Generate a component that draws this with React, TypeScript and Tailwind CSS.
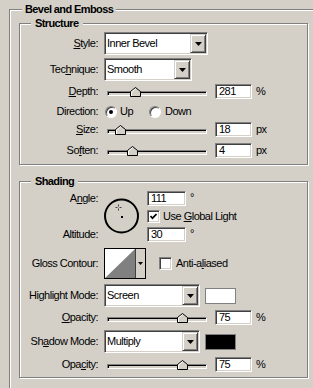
import React from "react";

// Photoshop "Layer Style > Bevel and Emboss" panel, classic Win2k chrome.

const sunken =
  "border border-[#808080] border-r-white border-b-white shadow-[inset_1px_1px_0_#404040,inset_-1px_-1px_0_#d4d0c8]";
const raised =
  "border border-[#d4d0c8] border-r-[#404040] border-b-[#404040] shadow-[inset_1px_1px_0_#fff,inset_-1px_-1px_0_#808080]";
const group =
  "relative border border-[#808080] shadow-[inset_1px_1px_0_#fff,1px_1px_0_#fff]";

function GroupTitle({ children }: { children: React.ReactNode }) {
  return (
    <span className="absolute left-[11px] top-[-7px] bg-[#d4d0c8] px-[4px] text-[11px] font-bold leading-[13px] tracking-[-0.6px]">
      {children}
    </span>
  );
}

function Label({ children }: { children: React.ReactNode }) {
  return <div className="w-[78px] shrink-0 text-right leading-[15px]">{children}</div>;
}

function Arrow() {
  return (
    <svg width="7" height="4" viewBox="0 0 7 4">
      <polygon points="0,0 7,0 3.5,4" fill="#000" />
    </svg>
  );
}

function Select({ value, width }: { value: string; width: string }) {
  return (
    <div className={`ml-[6px] flex h-[23px] shrink-0 bg-white p-[1px] ${width} ${sunken}`}>
      <span className="flex-1 pl-[1px] leading-[19px]">{value}</span>
      <div className={`flex h-[19px] w-[16px] items-center justify-center bg-[#d4d0c8] ${raised}`}>
        <Arrow />
      </div>
    </div>
  );
}

function NumBox({ value, width = "w-[37px]" }: { value: string; width?: string }) {
  return (
    <div className={`h-[15px] shrink-0 bg-white pl-[3px] leading-[13px] ${width} ${sunken}`}>
      {value}
    </div>
  );
}

function Slider({ pos }: { pos: number }) {
  return (
    <div className="relative ml-[9px] h-[15px] w-[100px] shrink-0">
      <div className="absolute left-0 top-[7px] h-[5px] w-[100px] border border-[#808080] border-r-white border-b-white bg-[#d4d0c8] shadow-[inset_1px_1px_0_#000]" />
      <svg
        className="absolute top-[3px]"
        style={{ left: pos - 5 }}
        width="11"
        height="10"
        viewBox="0 0 11 10"
      >
        <polygon points="0.5,9.5 0.5,4.5 5.5,0.5 10.5,4.5 10.5,9.5" fill="#d4d0c8" stroke="#000" />
        <polyline points="1.5,9 1.5,5 5.5,1.8" fill="none" stroke="#fff" />
      </svg>
    </div>
  );
}

function Radio({ checked }: { checked?: boolean }) {
  return (
    <div className="relative h-[12px] w-[12px] shrink-0 rounded-full border border-[#808080] border-r-white border-b-white bg-white shadow-[inset_1px_1px_0_#404040]">
      {checked ? (
        <div className="absolute left-[3px] top-[3px] h-[4px] w-[4px] rounded-full bg-black" />
      ) : null}
    </div>
  );
}

function Check({ checked }: { checked?: boolean }) {
  return (
    <div className={`flex h-[13px] w-[13px] shrink-0 items-center justify-center bg-white ${sunken}`}>
      {checked ? (
        <svg width="7" height="7" viewBox="0 0 7 7">
          <polyline points="0.5,3 2.5,5.2 6.5,1" fill="none" stroke="#000" strokeWidth="1.7" />
        </svg>
      ) : null}
    </div>
  );
}

function SliderRow({
  label,
  pos,
  value,
  unit,
  className = "",
}: {
  label: React.ReactNode;
  pos: number;
  value: string;
  unit: string;
  className?: string;
}) {
  return (
    <div className={`flex h-[15px] items-center ${className}`}>
      <Label>{label}</Label>
      <Slider pos={pos} />
      <div className="ml-[8px]">
        <NumBox value={value} />
      </div>
      <span className="ml-[4px] leading-[15px]">{unit}</span>
    </div>
  );
}

export default function App() {
  return (
    <div className="h-[388px] w-[313px] overflow-hidden bg-[#d4d0c8] pl-[9px] pt-[9px] font-['Liberation_Sans',Arial,sans-serif] text-[11px] tracking-[-0.5px] text-black">
      <div className="relative h-[400px] w-[320px] border border-[#808080] pl-[9px] pt-[13px] shadow-[inset_1px_1px_0_#fff]">
        <span className="absolute left-[12px] top-[-7px] bg-[#d4d0c8] px-[3px] text-[11px] font-bold leading-[13px] tracking-[-0.6px]">
          Bevel and Emboss
        </span>

        {/* Structure */}
        <div className={`h-[142px] w-[289px] ${group}`}>
          <GroupTitle>Structure</GroupTitle>

          <div className="mt-[8px] flex h-[23px] items-center">
            <Label>
              <u>S</u>tyle:
            </Label>
            <Select value="Inner Bevel" width="w-[104px]" />
          </div>

          <div className="mt-[3px] flex h-[23px] items-center">
            <Label>
              Tec<u>h</u>nique:
            </Label>
            <Select value="Smooth" width="w-[88px]" />
          </div>

          <SliderRow
            className="mt-[3px]"
            label={
              <>
                <u>D</u>epth:
              </>
            }
            pos={28}
            value="281"
            unit="%"
          />

          <div className="mt-[5px] flex h-[15px] items-center">
            <Label>Direction:</Label>
            <div className="ml-[7px]">
              <Radio checked />
            </div>
            <span className="ml-[3px] w-[29px] leading-[15px]">Up</span>
            <Radio />
            <span className="ml-[4px] leading-[15px]">Down</span>
          </div>

          <SliderRow
            className="mt-[3px]"
            label={
              <>
                <u>S</u>ize:
              </>
            }
            pos={13}
            value="18"
            unit="px"
          />

          <SliderRow
            className="mt-[6px]"
            label={
              <>
                So<u>f</u>ten:
              </>
            }
            pos={25}
            value="4"
            unit="px"
          />
        </div>

        {/* Shading */}
        <div className={`mt-[16px] h-[197px] w-[289px] ${group}`}>
          <GroupTitle>Shading</GroupTitle>

          <div className="mt-[9px] flex">
            <div className="flex w-[78px] shrink-0 flex-col items-end">
              <div className="h-[15px] leading-[15px]">
                A<u>n</u>gle:
              </div>
              <div className="mt-[21px] h-[15px] leading-[15px]">Altitude:</div>
            </div>
            <svg className="ml-[6px] mt-[7px] shrink-0" width="36" height="36" viewBox="0 0 36 36">
              <circle cx="17.5" cy="18" r="16.5" fill="none" stroke="#000" strokeWidth="2" />
              <path d="M14.5 6.5v2M14.5 10.5v2M11.5 9.5h2M15.5 9.5h2" stroke="#404040" strokeWidth="1" />
              <rect x="17" y="18" width="2" height="2" fill="#000" />
            </svg>
            <div className="ml-[7px] flex flex-col">
              <div className="flex h-[15px] items-center">
                <NumBox value="111" width="w-[39px]" />
                <span className="ml-[4px] self-start leading-[13px]">°</span>
              </div>
              <div className="mt-[4px] flex h-[13px] items-center">
                <Check checked />
                <span className="ml-[3px] leading-[13px]">
                  Use <u>G</u>lobal Light
                </span>
              </div>
              <div className="mt-[4px] flex h-[15px] items-center">
                <NumBox value="30" width="w-[39px]" />
                <span className="ml-[4px] self-start leading-[13px]">°</span>
              </div>
            </div>
          </div>

          <div className="mt-[6px] flex h-[31px] items-center">
            <Label>Gloss Contour:</Label>
            <div className="ml-[6px] flex h-[31px] w-[42px] shrink-0 border border-[#000]">
              <svg width="30" height="29" viewBox="0 0 30 29" className="shrink-0">
                <rect width="30" height="29" fill="#fff" />
                <polygon points="0,29 30,0 30,29" fill="#808080" />
              </svg>
              <div className="flex flex-1 items-center justify-center border-l border-[#404040] bg-[#d4d0c8]">
                <svg width="5" height="3" viewBox="0 0 5 3">
                  <polygon points="0,0 5,0 2.5,3" fill="#000" />
                </svg>
              </div>
            </div>
            <div className="ml-[13px]">
              <Check />
            </div>
            <span className="ml-[4px] leading-[15px]">
              Anti-a<u>l</u>iased
            </span>
          </div>

          <div className="mt-[5px] flex h-[23px] items-center">
            <Label>Highlight Mode:</Label>
            <Select value="Screen" width="w-[96px]" />
            <div className="ml-[5px] h-[16px] w-[31px] border border-[#808080] bg-white" />
          </div>

          <SliderRow
            className="mt-[3px]"
            label={
              <>
                <u>O</u>pacity:
              </>
            }
            pos={75}
            value="75"
            unit="%"
          />

          <div className="mt-[5px] flex h-[23px] items-center">
            <Label>
              Sh<u>a</u>dow Mode:
            </Label>
            <Select value="Multiply" width="w-[96px]" />
            <div className="ml-[5px] h-[16px] w-[31px] border border-[#808080] bg-black" />
          </div>

          <SliderRow
            className="mt-[4px]"
            label={
              <>
                Opa<u>c</u>ity:
              </>
            }
            pos={75}
            value="75"
            unit="%"
          />
        </div>
      </div>
    </div>
  );
}
